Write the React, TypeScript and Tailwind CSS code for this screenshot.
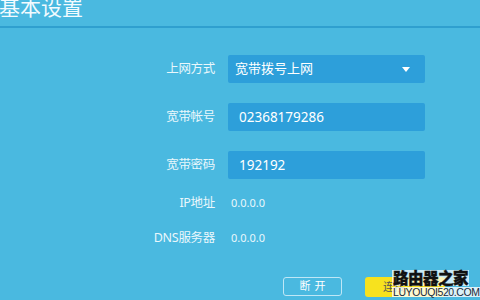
import React from "react";

const font = { fontFamily: '"Noto Sans", "Noto Sans CJK SC", sans-serif' };

function Row({ label, children, h = "h-[28px]" }: { label: string; children: React.ReactNode; h?: string }) {
  return (
    <div className={`flex items-center ${h}`}>
      <div className="w-[215px] text-right text-[12.5px] text-[#e9f7fc] tracking-[-0.3px]">{label}</div>
      <div className="ml-[13px] flex-1">{children}</div>
    </div>
  );
}

export default function App() {
  return (
    <div className="relative w-[480px] h-[300px] overflow-hidden bg-[#4ab9e0]" style={font}>
      <div className="h-[28px] border-b-2 border-[#2f9fcf] overflow-hidden">
        <div className="mt-[-8px] ml-[-1px] text-[21px] leading-[30px] text-[#f2fbff]">基本设置</div>
      </div>
      <div className="flex flex-col pt-[27px]">
        <Row label="上网方式">
          <div className="w-[197px] h-[28px] rounded-[2px] bg-[#2d9fda] flex items-center justify-between pl-[7px] pr-[15px] text-[13px] text-white">
            <span>宽带拨号上网</span>
            <svg width="8" height="5" viewBox="0 0 8 5"><path d="M0 0h8L4 5z" fill="#ffffff" /></svg>
          </div>
        </Row>
        <div className="h-[20px]" />
        <Row label="宽带帐号">
          <div className="w-[197px] h-[28px] rounded-[2px] bg-[#2d9fda] flex items-center pl-[11px] text-[13.5px] text-white">02368179286</div>
        </Row>
        <div className="h-[20px]" />
        <Row label="宽带密码">
          <div className="w-[197px] h-[28px] rounded-[2px] bg-[#2d9fda] flex items-center pl-[11px] text-[13.5px] text-white">192192</div>
        </Row>
        <div className="h-[10px]" />
        <Row label="IP地址" h="h-[28px]">
          <div className="pl-[3px] text-[11px] text-[#e9f7fc]">0.0.0.0</div>
        </Row>
        <div className="h-[7px]" />
        <Row label="DNS服务器" h="h-[28px]">
          <div className="pl-[3px] text-[11px] text-[#e9f7fc]">0.0.0.0</div>
        </Row>
        <div className="flex pl-[283px] pt-[25px] gap-[23px]">
          <div className="w-[59px] h-[19px] rounded-[3px] border border-[#bfe7f6] flex items-center justify-center text-[11px] text-white tracking-[4px] pl-[4px]">断开</div>
          <div className="w-[80px] h-[20px] rounded-[3px] bg-[#f7e21e] flex items-center pl-[18px] text-[11px] text-[#555]">连接</div>
        </div>
      </div>
      <div className="absolute left-[392px] top-[270px] flex flex-col items-start leading-none">
        <div className="px-[1px] bg-white/70 text-[15.5px] font-black text-[#111] tracking-[-0.5px]" style={{ fontFamily: '"Noto Sans CJK SC", sans-serif', WebkitTextStroke: "0.4px #111" }}>路由器之家</div>
        <div className="mt-[1px] px-[1px] bg-white/80 text-[10.5px] text-[#1a2a3a] tracking-[-0.4px]" style={{ fontFamily: '"Liberation Sans", sans-serif' }}>LUYOUQI520.COM</div>
      </div>
    </div>
  );
}
